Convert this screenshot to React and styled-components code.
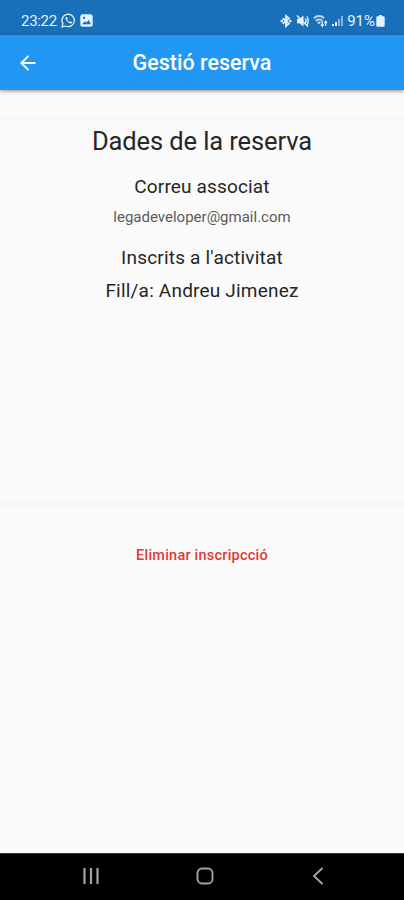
import React from "react";
import styled, { createGlobalStyle } from "styled-components";

const GlobalStyle = createGlobalStyle`
  *, *::before, *::after { box-sizing: border-box; }
  body { margin: 0; background: #fafafa; }
`;

const Screen = styled.div`
  display: flex;
  flex-direction: column;
  width: 404px;
  height: 900px;
  overflow: hidden;
  background: #fafafa;
  font-family: Roboto, sans-serif;
`;

const StatusBar = styled.header`
  display: flex;
  align-items: center;
  flex: 0 0 35px;
  padding: 6px 19px 0 21px;
  background: #1a70b8;
  color: #e3f1fb;
`;

const StatusText = styled.span`
  font-size: 15px;
  line-height: 18px;
  letter-spacing: ${(p) => p.$tracking || "0"};
  white-space: nowrap;
`;

const StatusGroup = styled.div`
  display: flex;
  align-items: center;
  gap: ${(p) => p.$gap || "4px"};
  margin-left: ${(p) => (p.$end ? "auto" : "0")};
`;

const Glyph = styled.svg`
  display: block;
  flex: none;
`;

const AppBar = styled.div`
  display: grid;
  grid-template-columns: 56px 1fr 56px;
  align-items: center;
  flex: 0 0 55px;
  background: #2296f3;
  box-shadow: 0 1px 4px rgba(0, 0, 0, 0.45);
  color: #fff;
  z-index: 1;
`;

const BackButton = styled.button`
  display: grid;
  place-items: center;
  height: 55px;
  padding: 0;
  border: 0;
  background: none;
  color: #fff;
`;

const Title = styled.h1`
  margin: 0;
  text-align: center;
  font-size: 21.5px;
  font-weight: 500;
  line-height: 28px;
  white-space: nowrap;
`;

const Details = styled.main`
  display: flex;
  flex-direction: column;
  align-items: center;
  height: 387px;
  margin-top: 28px;
  padding-top: 5px;
  border-top: 2px solid #f6f6f6;
  border-bottom: 2px solid #f4f4f4;
`;

const Line = styled.p`
  margin: ${(p) => p.$top || "0"} 0 0;
  color: ${(p) => p.$color || "#262626"};
  font-size: ${(p) => p.$size};
  font-weight: 400;
  line-height: ${(p) => p.$height};
  letter-spacing: ${(p) => p.$tracking || "0"};
  white-space: nowrap;
`;

const Actions = styled.section`
  display: flex;
  flex: 1;
  align-items: flex-start;
  justify-content: center;
  padding-top: 41px;
`;

const DeleteButton = styled.button`
  padding: 0;
  border: 0;
  background: none;
  color: #dd3c35;
  font: 500 14.5px/20px Roboto, sans-serif;
  letter-spacing: 0.22px;
  white-space: nowrap;
`;

const NavBar = styled.nav`
  display: flex;
  align-items: center;
  justify-content: space-between;
  flex: 0 0 47px;
  padding: 0 74px 2px 79px;
  border-top: 1px solid #3a3a3a;
  background: #000;
`;

const NavButton = styled.button`
  display: grid;
  place-items: center;
  width: 24px;
  height: 24px;
  padding: 0;
  border: 0;
  background: none;
  color: #a2a2a2;
`;

const WhatsAppIcon = () => (
  <Glyph width="15" height="15" viewBox="0 0 15 15" fill="none" stroke="currentColor">
    <path d="M1 14 1.9 10.7A6.2 6.2 0 1 1 4.4 13Z" strokeWidth="1.3" strokeLinejoin="round" />
    <path d="M5 4.1c-1 1-.6 2.6 1.3 4.5s3.7 2.4 4.7 1.3c.3-.5.2-.8-.2-1L9.3 8.2l-.9.8C7.5 8.7 6.5 7.7 6.1 6.8l.7-.9-.7-1.600C5.800 3.900 5.300 3.800 5 4.100Z" fill="currentColor" stroke="none" />
  </Glyph>
);

const PictureIcon = () => (
  <Glyph width="13" height="13" viewBox="0 0 13 13">
    <rect x="0.3" y="0.3" width="12.4" height="12.4" rx="2.5" fill="currentColor" />
    <path d="M2.2 10.2 4.7 7.2 6.3 8.8 8.7 6 11 10.2Z" fill="#1a70b8" />
    <circle cx="4" cy="3.9" r="1.1" fill="#1a70b8" />
  </Glyph>
);

const BluetoothIcon = () => (
  <Glyph width="12" height="14" viewBox="0 0 12 14" fill="none" stroke="currentColor">
    <path d="M2.600 4.300 9 9.600 6 12.100V1.900L9 4.400 2.600 9.700" strokeWidth="1.800" />
    <circle cx="1.700" cy="7" r="1.300" fill="currentColor" stroke="none" />
    <circle cx="10.300" cy="7" r="1.300" fill="currentColor" stroke="none" />
  </Glyph>
);

const MuteIcon = () => (
  <Glyph width="13" height="14" viewBox="0 0 13 14" fill="none" stroke="currentColor">
    <path d="M1 4.700h2.500L7.500 1.500v11L3.500 9.300H1Z" fill="currentColor" stroke="none" />
    <path d="M9.300 4.500q1.500 2.500 0 5M11 2.500q2.200 4.500 0 9" strokeWidth="1.400" />
    <path d="M1 1.500 12 12.500" strokeWidth="1.500" />
  </Glyph>
);

const WifiIcon = () => (
  <Glyph width="15" height="14" viewBox="0 0 15 14" fill="none" stroke="currentColor">
    <path d="M.8 4.200Q6-.2 11.200 4.200M2.700 6.800q3.300-2.700 6.600 0M4.700 9.200q1.300-1.200 2.600 0" strokeWidth="1.900" opacity=".8" />
    <path d="M9.300 7v5M7.900 10.500l1.400 1.700 1.400-1.700M12.700 12V7.500M11.300 9l1.400-1.700L14.100 9" strokeWidth="1.200" />
  </Glyph>
);

const SignalIcon = () => (
  <Glyph width="11" height="12" viewBox="0 0 11 12" fill="currentColor">
    <path d="M0 9h2v2H0ZM3 7h2v4H3Z" />
    <path d="M6 4h2v7H6ZM9 1h2v10H9Z" opacity=".55" />
  </Glyph>
);

const BatteryIcon = () => (
  <Glyph width="9" height="12" viewBox="0 0 9 12" fill="currentColor">
    <path d="M3 0h3v1.300h1.500A1.200 1.200 0 0 1 8.700 2.500v8A1.200 1.200 0 0 1 7.500 11.700h-6A1.200 1.200 0 0 1 .3 10.500v-8A1.200 1.200 0 0 1 1.500 1.300H3Z" />
  </Glyph>
);

const BackArrow = () => (
  <Glyph width="18" height="18" viewBox="0 0 18 18" fill="none" stroke="currentColor" strokeWidth="1.900">
    <path d="M16.500 9H2.500M9.500 1.800 2.300 9l7.200 7.200" />
  </Glyph>
);

const RecentsIcon = () => (
  <Glyph width="18" height="18" viewBox="0 0 18 18" fill="none" stroke="currentColor" strokeWidth="2.200">
    <path d="M2.500 1v16M9 1v16M15.500 1v16" />
  </Glyph>
);

const HomeIcon = () => (
  <Glyph width="18" height="18" viewBox="0 0 18 18" fill="none" stroke="currentColor" strokeWidth="1.900">
    <rect x="1.500" y="1.500" width="15" height="15" rx="4.500" />
  </Glyph>
);

const ChevronIcon = () => (
  <Glyph width="18" height="18" viewBox="0 0 18 18" fill="none" stroke="currentColor" strokeWidth="1.900">
    <path d="M13.500 1 5 9l8.500 8" />
  </Glyph>
);

export default function App() {
  return (
    <>
      <GlobalStyle />
      <Screen>
        <StatusBar>
          <StatusGroup>
            <StatusText $tracking="-0.3px">23:22</StatusText>
            <WhatsAppIcon />
            <PictureIcon />
          </StatusGroup>
          <StatusGroup $end $gap="4px">
            <BluetoothIcon />
            <MuteIcon />
            <WifiIcon />
            <SignalIcon />
            <StatusGroup $gap="1px">
              <StatusText>91%</StatusText>
              <BatteryIcon />
            </StatusGroup>
          </StatusGroup>
        </StatusBar>
        <AppBar>
          <BackButton aria-label="Enrere"><BackArrow /></BackButton>
          <Title>Gestió reserva</Title>
        </AppBar>
        <Details>
          <Line $size="25.5px" $height="32px" $tracking="-0.1px">Dades de la reserva</Line>
          <Line $top="17px" $size="19px" $height="26px" $tracking="0.15px">Correu associat</Line>
          <Line $top="7px" $size="15px" $height="20px" $color="#5a5a5a">legadeveloper@gmail.com</Line>
          <Line $top="18px" $size="19px" $height="26px" $tracking="0.2px">Inscrits a l'activitat</Line>
          <Line $top="7px" $size="19px" $height="26px" $tracking="0.2px">Fill/a: Andreu Jimenez</Line>
        </Details>
        <Actions>
          <DeleteButton>Eliminar inscripcció</DeleteButton>
        </Actions>
        <NavBar>
          <NavButton aria-label="Recents"><RecentsIcon /></NavButton>
          <NavButton aria-label="Inici"><HomeIcon /></NavButton>
          <NavButton aria-label="Enrere"><ChevronIcon /></NavButton>
        </NavBar>
      </Screen>
    </>
  );
}
